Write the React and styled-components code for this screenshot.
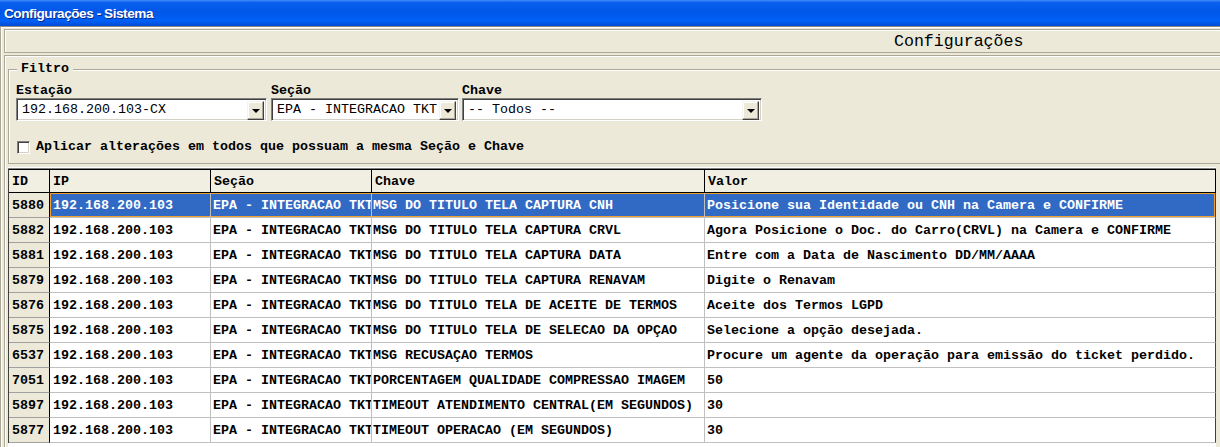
import React from "react";
import styled, { createGlobalStyle } from "styled-components";

const GlobalStyle = createGlobalStyle`
	html, body {
		margin: 0;
		padding: 0;
		background: #ece9d8;
		overflow: hidden;
	}
	#root {
		width: 1220px;
		height: 447px;
		overflow: hidden;
	}
`;

const Window = styled.div`
	width: 1260px;
	height: 447px;
	background: #ece9d8;
	font-family: "Liberation Mono", "Courier New", monospace;
	font-size: 13.33px;
	color: #000;
`;

const TitleBar = styled.div`
	height: 26px;
	display: flex;
	align-items: center;
	padding-left: 4px;
	background: linear-gradient(to bottom, #3d8cf6 0%, #0a5fee 10%, #0057e8 45%, #0060f6 80%, #004bd6 100%);
	font-family: "Liberation Sans", Arial, sans-serif;
	font-weight: bold;
	font-size: 13.6px;
	letter-spacing: -0.45px;
	color: #fff;
	text-shadow: 1px 1px 0 #0a2a8a;
`;

const Client = styled.div`
	border-top: 1px solid #8a8878;
	border-left: 1px solid #aca899;
	padding: 2px 0 0 3px;
	box-shadow: inset 1px 1px 0 #fff;
	height: 420px;
`;

const HeaderPanel = styled.div`
	height: 22px;
	border: 1px solid #aca899;
	box-shadow: inset 1px 1px 0 #fff;
	display: flex;
	align-items: center;
	padding-left: 889px;
	font-size: 16.6px;
`;

const Body = styled.div`
	margin-top: 2px;
	border-top: 1px solid #aca899;
	border-left: 1px solid #aca899;
	box-shadow: inset 1px 1px 0 #fff;
	padding: 1px 0 0 3px;
`;

const FilterBox = styled.fieldset`
	margin: 4px 0 0 0;
	padding: 7px 0 8px 7px;
	border: 1px solid #aca899;
	border-right: none;
	box-shadow: inset 1px 1px 0 #fff;
	min-width: 0;
`;

const Legend = styled.legend`
	margin-left: 1px;
	padding: 0 4px;
	font-weight: bold;
	background: #ece9d8;
	line-height: 16px;
`;

const FieldsRow = styled.div`
	display: flex;
	align-items: flex-end;
`;

const Field = styled.div`
	display: flex;
	flex-direction: column;
	width: ${(p) => p.$w}px;
	margin-right: ${(p) => p.$gap || 0}px;
`;

const Label = styled.div`
	font-weight: bold;
	line-height: 14px;
	height: 14px;
`;

const Combo = styled.div`
	position: relative;
	height: 23px;
	box-sizing: border-box;
	background: #fff;
	border-top: 1px solid #808080;
	border-left: 1px solid #808080;
	border-right: 1px solid #fff;
	border-bottom: 1px solid #fff;
	box-shadow: inset 1px 1px 0 #404040, inset -1px -1px 0 #d4d0c8;
	display: flex;
	align-items: center;
	padding-left: 5px;
	white-space: nowrap;
	overflow: hidden;
`;

const DropButton = styled.div`
	position: absolute;
	right: 2px;
	top: 2px;
	width: 17px;
	height: 19px;
	box-sizing: border-box;
	background: #ece9d8;
	border-top: 1px solid #f4f3ee;
	border-left: 1px solid #f4f3ee;
	border-right: 1px solid #404040;
	border-bottom: 1px solid #404040;
	box-shadow: inset -1px -1px 0 #aca899, inset 1px 1px 0 #fff;
	display: flex;
	align-items: center;
	justify-content: center;

	&::after {
		content: "";
		border-left: 4px solid transparent;
		border-right: 4px solid transparent;
		border-top: 4px solid #000;
		margin-top: 1px;
	}
`;

const CheckRow = styled.label`
	display: flex;
	align-items: center;
	margin-top: 18px;
	margin-left: 1px;
	font-weight: bold;
	line-height: 16px;
`;

const CheckBox = styled.span`
	width: 13px;
	height: 13px;
	box-sizing: border-box;
	background: #fff;
	border-top: 1px solid #808080;
	border-left: 1px solid #808080;
	border-right: 1px solid #fff;
	border-bottom: 1px solid #fff;
	box-shadow: inset 1px 1px 0 #404040, inset -1px -1px 0 #d4d0c8;
	margin-right: 6px;
`;

const Grid = styled.div`
	margin-top: 4px;
	width: 1208px;
	height: 300px;
	border-top: 1px solid #808080;
	box-shadow: 0 -1px 0 #fff;
	background: #fff;
`;

const Row = styled.div`
	display: grid;
	grid-template-columns: 41px 161px 161px 333px 511px;
	border-left: 1px solid #404040;
	height: ${(p) => (p.$head ? 24 : 25)}px;
`;

const HeadCell = styled.div`
	box-sizing: border-box;
	background: #f1efe2;
	border-top: 1px solid #000;
	border-right: 1px solid #000;
	border-bottom: 1px solid #000;
	font-weight: bold;
	padding-left: 3px;
	display: flex;
	align-items: center;
	white-space: nowrap;
	overflow: hidden;
`;

const IdCell = styled.div`
	box-sizing: border-box;
	background: #ece9d8;
	border-right: 1px solid #000;
	border-bottom: 1px solid #a0a0a0;
	font-weight: bold;
	padding-left: 3px;
	display: flex;
	align-items: center;
`;

const Cell = styled.div`
	box-sizing: border-box;
	background: ${(p) => (p.$sel ? "#316ac5" : "#fff")};
	color: ${(p) => (p.$sel ? "#fff" : "#000")};
	border-right: 1px solid ${(p) => (p.$last ? "#404040" : "#c0c0c0")};
	border-bottom: 1px solid #c0c0c0;
	font-weight: bold;
	padding-left: ${(p) => p.$pad}px;
	display: flex;
	align-items: center;
	white-space: nowrap;
	overflow: hidden;
	box-shadow: ${(p) =>
		p.$sel
			? `inset 0 1px 0 #f0a030, inset 0 -1px 0 #f0a030${p.$first ? ", inset 1px 0 0 #f0a030" : ""}${
					p.$last ? ", inset -1px 0 0 #f0a030" : ""
			  }`
			: "none"};
`;

const rows = [
	["5880", "MSG DO TITULO TELA CAPTURA CNH", "Posicione sua Identidade ou CNH na Camera e CONFIRME"],
	["5882", "MSG DO TITULO TELA CAPTURA CRVL", "Agora Posicione o Doc. do Carro(CRVL) na Camera e CONFIRME"],
	["5881", "MSG DO TITULO TELA CAPTURA DATA", "Entre com a Data de Nascimento DD/MM/AAAA"],
	["5879", "MSG DO TITULO TELA CAPTURA RENAVAM", "Digite o Renavam"],
	["5876", "MSG DO TITULO TELA DE ACEITE DE TERMOS", "Aceite dos Termos LGPD"],
	["5875", "MSG DO TITULO TELA DE SELECAO DA OPÇAO", "Selecione a opção desejada."],
	["6537", "MSG RECUSAÇAO TERMOS", "Procure um agente da operação para emissão do ticket perdido."],
	["7051", "PORCENTAGEM QUALIDADE COMPRESSAO IMAGEM", "50"],
	["5897", "TIMEOUT ATENDIMENTO CENTRAL(EM SEGUNDOS)", "30"],
	["5877", "TIMEOUT OPERACAO (EM SEGUNDOS)", "30"],
];

export default function App() {
	return (
		<Window>
			<GlobalStyle />
			<TitleBar>Configurações - Sistema</TitleBar>
			<Client>
				<HeaderPanel>Configurações</HeaderPanel>
				<Body>
					<FilterBox>
						<Legend>Filtro</Legend>
						<FieldsRow>
							<Field $w={251} $gap={4}>
								<Label>Estação</Label>
								<Combo>
									192.168.200.103-CX
									<DropButton />
								</Combo>
							</Field>
							<Field $w={188} $gap={3}>
								<Label>Seção</Label>
								<Combo>
									EPA - INTEGRACAO TKT
									<DropButton />
								</Combo>
							</Field>
							<Field $w={300}>
								<Label>Chave</Label>
								<Combo>
									-- Todos --
									<DropButton />
								</Combo>
							</Field>
						</FieldsRow>
						<CheckRow>
							<CheckBox />
							Aplicar alterações em todos que possuam a mesma Seção e Chave
						</CheckRow>
					</FilterBox>
					<Grid>
						<Row $head>
							<HeadCell>ID</HeadCell>
							<HeadCell>IP</HeadCell>
							<HeadCell>Seção</HeadCell>
							<HeadCell>Chave</HeadCell>
							<HeadCell>Valor</HeadCell>
						</Row>
						{rows.map(([id, chave, valor], i) => (
							<Row key={id}>
								<IdCell>{id}</IdCell>
								<Cell $sel={i === 0} $first $pad={3}>
									192.168.200.103
								</Cell>
								<Cell $sel={i === 0} $pad={2}>
									EPA - INTEGRACAO TKT
								</Cell>
								<Cell $sel={i === 0} $pad={1}>
									{chave}
								</Cell>
								<Cell $sel={i === 0} $last $pad={2}>
									{valor}
								</Cell>
							</Row>
						))}
					</Grid>
				</Body>
			</Client>
		</Window>
	);
}
